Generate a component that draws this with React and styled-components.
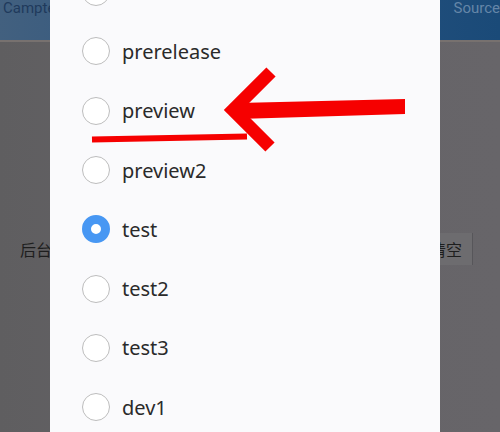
import styled, { createGlobalStyle } from "styled-components"

const GlobalStyle = createGlobalStyle`
    body {
        margin: 0;
        font-family: "Noto Sans", "Noto Sans CJK SC", sans-serif;
    }
`

const options = ["review", "prerelease", "preview", "preview2", "test", "test2", "test3", "dev1"]

export default function App() {
    const selected = "test"

    return (
        <Page>
            <GlobalStyle />
            <TopBar>
                <Tab color="#1f3a5c">Camptest</Tab>
                <Tab color="#6586a8">Source</Tab>
            </TopBar>

            <FieldRow>
                <Label>后台地址</Label>
                <ClearButton>清空</ClearButton>
            </FieldRow>

            <Dialog>
                <OptionList>
                    {options.map(name => (
                        <Option key={name}>
                            <Radio checked={name === selected} />
                            <OptionText>{name}</OptionText>
                        </Option>
                    ))}
                </OptionList>
            </Dialog>

            <Annotation viewBox="0 0 500 432">
                <polygon points="238,103 405,99 405,114 238,119" fill="#f60000" />
                <polyline points="271,72 233,110 270,147" fill="none" stroke="#f60000" strokeWidth="13" strokeLinejoin="miter" />
                <line x1="92" y1="139.5" x2="247" y2="136.5" stroke="#f60000" strokeWidth="6" />
            </Annotation>
        </Page>
    )
}

const Page = styled.div`
    position: relative;
    width: 500px;
    height: 432px;
    overflow: hidden;
    background: linear-gradient(90deg, #5f5e60 0%, #656367 50%, #676569 100%);
`

const TopBar = styled.div`
    display: flex;
    justify-content: space-between;
    align-items: flex-start;
    height: 40px;
    padding: 1px 0 0 3px;
    box-sizing: border-box;
    background: linear-gradient(90deg, #42607f 0%, #2a5480 50%, #1a4a78 100%);
    border-bottom: 2px solid #77716f;
    height: 42px;
`

const Tab = styled.span`
    font-family: "Roboto", "Noto Sans", sans-serif;
    font-size: 15px;
    line-height: 15px;
    color: ${props => props.color};
`

const FieldRow = styled.div`
    display: flex;
    justify-content: space-between;
    align-items: center;
    margin-top: 191px;
    padding: 0 27px 0 20px;
`

const Label = styled.span`
    font-family: "Noto Sans CJK SC", sans-serif;
    font-size: 16px;
    color: #1e1e1e;
`

const ClearButton = styled.span`
    display: flex;
    align-items: center;
    height: 32px;
    padding: 0 10px 0 8px;
    font-family: "Noto Sans CJK SC", sans-serif;
    font-size: 16px;
    color: #1e1e1e;
    background-color: #6d6c6f;
    border-right: 1px solid #57565a;
`

const Dialog = styled.div`
    position: absolute;
    top: 0;
    bottom: 0;
    left: 50px;
    width: 390px;
    overflow: hidden;
    background-color: #fafafc;
`

const OptionList = styled.div`
    display: flex;
    flex-direction: column;
    margin-top: -37.5px;
`

const Option = styled.div`
    display: flex;
    align-items: center;
    gap: 12px;
    height: 59.3px;
    padding-left: 32px;
`

const Radio = styled.div`
    width: 28px;
    height: 28px;
    box-sizing: border-box;
    border-radius: 50%;
    background-color: white;
    border: ${props => props.checked ? "9px solid #4797f3" : "1.5px solid #bdbdbd"};
`

const OptionText = styled.span`
    font-family: "Noto Sans", sans-serif;
    font-size: 20px;
    color: #2a2a2a;
`

const Annotation = styled.svg`
    position: absolute;
    top: 0;
    left: 0;
    width: 500px;
    height: 432px;
    pointer-events: none;
`
